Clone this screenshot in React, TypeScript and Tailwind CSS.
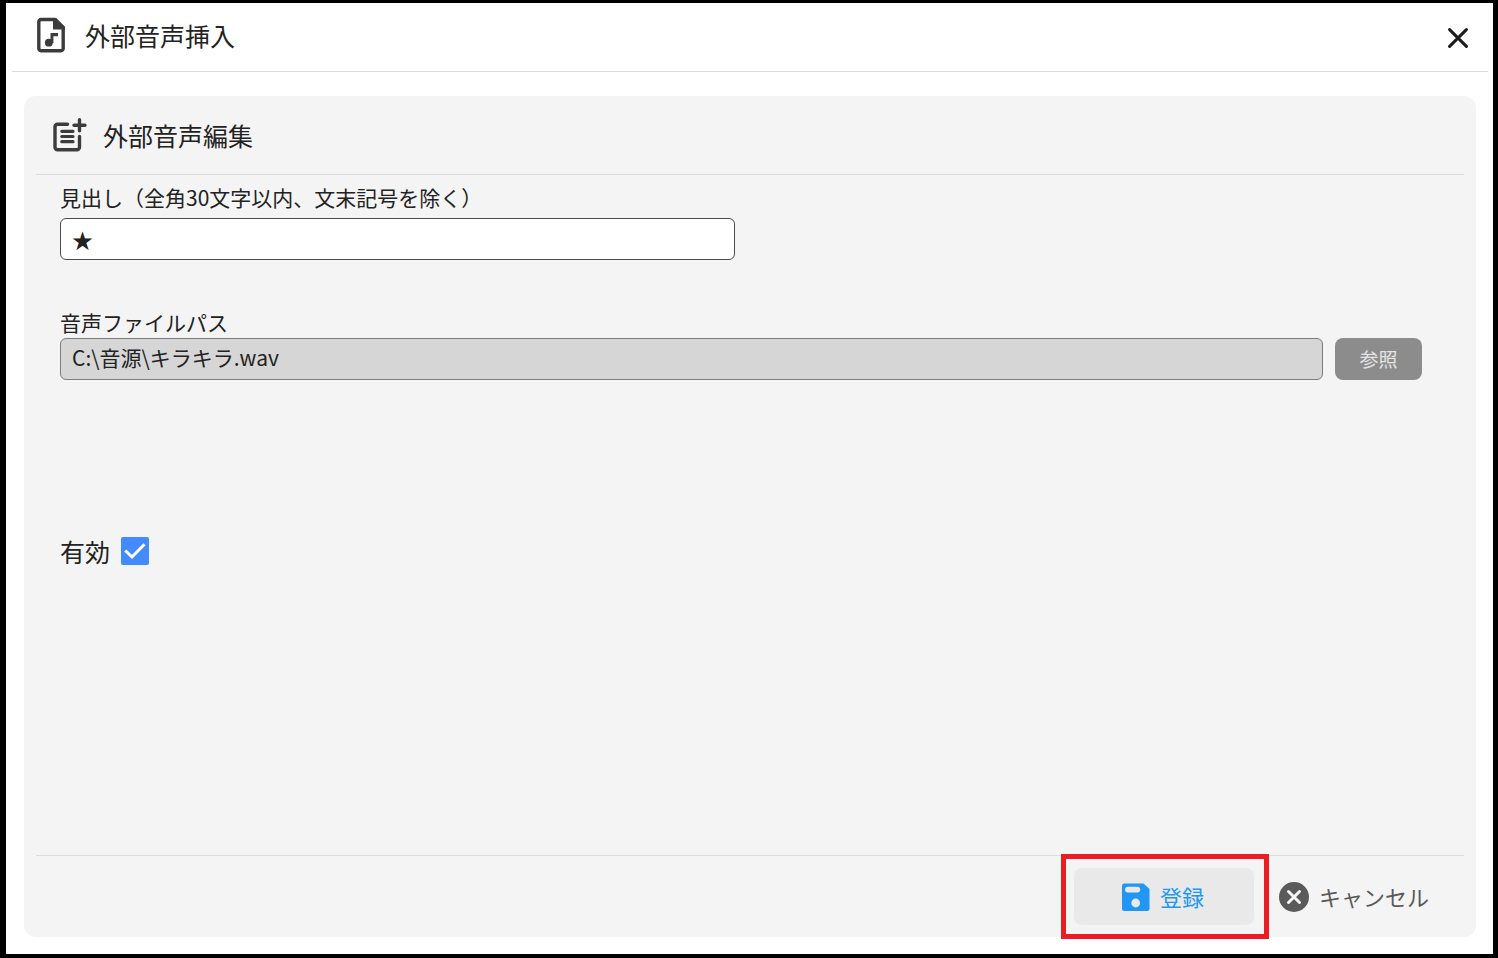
import { useState } from "react";

function AudioFileIcon() {
  return (
    <svg className="shrink-0" width="28" height="36" viewBox="0 0 28 36" fill="none" aria-hidden="true">
      <path
        d="M18 2.500H4A2.200 2.200 0 0 0 1.800 4.700V31.500a2.200 2.200 0 0 0 2.200 2.200h20a2.200 2.200 0 0 0 2.200-2.200V10.500z"
        stroke="#3c3c3c"
        strokeWidth="3.400"
        strokeLinejoin="round"
      />
      <path d="M16 1h3L28 10v2.500H16z" fill="#3c3c3c" />
      <circle cx="11.800" cy="25.700" r="3.900" fill="#3c3c3c" />
      <path d="M13.500 16h7.500v3.300h-4.600v6.700h-2.900z" fill="#3c3c3c" />
    </svg>
  );
}

function PostAddIcon() {
  return (
    <svg className="shrink-0" width="34" height="34" viewBox="0 0 34 34" fill="none" stroke="#3c3c3c" strokeLinecap="round" aria-hidden="true">
      <path d="M14.500 6.200H4.500A2.500 2.500 0 0 0 2 8.700v20.500a2.500 2.500 0 0 0 2.500 2.500h19.500a2.500 2.500 0 0 0 2.500-2.500V18.500" strokeWidth="3.400" />
      <path d="M8.800 13.300h11.200M8.800 18.500h11.200M8.800 23.700h11.200" strokeWidth="3.200" />
      <path d="M26.500 1.700v11M21 7.200h11" strokeWidth="3.400" />
    </svg>
  );
}

function CloseIcon() {
  return (
    <svg width="20" height="20" viewBox="0 0 20 20" fill="none" stroke="#1c1c1c" strokeWidth="3" strokeLinecap="round" aria-hidden="true">
      <path d="M1.600 1.600l16.800 16.800M18.400 1.600L1.600 18.400" />
    </svg>
  );
}

function SaveIcon() {
  return (
    <svg className="shrink-0" width="28" height="28" viewBox="0 0 28 28" aria-hidden="true">
      <path d="M2.500 .5h19L27.500 6v19.500a2.500 2.500 0 0 1-2.500 2.500H2.500A2.500 2.500 0 0 1 0 25.500V3A2.500 2.500 0 0 1 2.500 .5z" fill="#2196f3" />
      <rect x="3" y="3.700" width="15.200" height="5.800" rx="2.900" fill="#e9e9e9" />
      <circle cx="13.700" cy="20" r="4.400" fill="#e9e9e9" />
    </svg>
  );
}

function CancelIcon() {
  return (
    <svg className="shrink-0" width="30" height="30" viewBox="0 0 30 30" aria-hidden="true">
      <circle cx="15" cy="15" r="15" fill="#5a5a5a" />
      <path d="M9.500 9.500l11 11M20.500 9.500l-11 11" stroke="#f4f4f4" strokeWidth="3" strokeLinecap="round" />
    </svg>
  );
}

export default function App() {
  const [heading, setHeading] = useState("★");
  const [enabled, setEnabled] = useState(true);

  return (
    <div className="flex min-h-screen flex-col border-t-[3px] border-r-[5px] border-b-4 border-l-[6px] border-black bg-white font-['Noto_Sans_CJK_JP',sans-serif] text-[#222222]">
      <header className="mr-[5px] ml-1.5 flex h-[69px] items-center border-b border-[#dcdcdc] pr-5 pb-1 pl-[25px]">
        <AudioFileIcon />
        <h1 className="ml-5 text-[25px] leading-9">外部音声挿入</h1>
        <button type="button" aria-label="閉じる" className="mt-1.5 ml-auto">
          <CloseIcon />
        </button>
      </header>

      <main className="mt-6 mr-[17px] mb-[17px] ml-[18px] flex flex-1 flex-col rounded-xl bg-[#f4f4f4] px-3">
        <div className="flex h-[79px] items-center border-b border-[#dcdcdc] pl-[17px]">
          <PostAddIcon />
          <h2 className="ml-4 text-[25px] leading-9">外部音声編集</h2>
        </div>

        <form className="flex flex-1 flex-col pr-[42px] pl-6">
          <label htmlFor="heading" className="mt-1.5 text-[21px] leading-8">
            見出し（全角30文字以内、文末記号を除く）
          </label>
          <input
            id="heading"
            type="text"
            value={heading}
            onChange={(e) => setHeading(e.target.value)}
            className="mt-[5px] h-[42px] w-full max-w-[675px] rounded-md border border-[#4c4c4c] bg-white px-[11px] text-[21px]"
          />

          <label htmlFor="path" className="mt-[46px] text-[21px] leading-8">
            音声ファイルパス
          </label>
          <div className="flex gap-3">
            <input
              id="path"
              type="text"
              readOnly
              value="C:\音源\キラキラ.wav"
              className="h-[42px] min-w-0 flex-1 rounded-md border border-[#7c7c7c] bg-[#d6d6d6] px-[11px] pb-1 text-[21px]"
            />
            <button type="button" className="h-[42px] w-[87px] rounded-lg bg-[#8c8c8c] text-[19px] text-[#e4e4e4]">
              参照
            </button>
          </div>

          <div className="mt-[153px] flex items-center gap-[11px]">
            <label htmlFor="enabled" className="text-[25px] leading-9">
              有効
            </label>
            <span className="grid size-7 place-items-center">
              <input
                id="enabled"
                type="checkbox"
                checked={enabled}
                onChange={(e) => setEnabled(e.target.checked)}
                className="peer col-start-1 row-start-1 size-7 appearance-none rounded-xs border-2 border-[#5a5a5a] bg-white checked:border-0 checked:bg-[#448aff]"
              />
              <svg className="pointer-events-none invisible col-start-1 row-start-1 peer-checked:visible" width="28" height="28" viewBox="0 0 28 28" fill="none" aria-hidden="true">
                <path d="M4.300 13.500l6.700 6.500L23.500 7.300" stroke="#ffffff" strokeWidth="3" />
              </svg>
            </span>
          </div>
        </form>

        <footer className="flex items-center justify-end border-t border-[#dcdcdc] pt-3 pr-[35px] pb-3">
          <div className="relative">
            <button type="button" className="flex h-[57px] w-[180px] items-center justify-center gap-2.5 rounded-lg bg-[#e9e9e9] pr-0.5 text-[22px] text-[#2196f3]">
              <SaveIcon />
              登録
            </button>
            <div className="pointer-events-none absolute -top-3.5 -right-[15px] -bottom-3.5 -left-[13px] border-5 border-[#ed1c24]" />
          </div>
          <button type="button" className="ml-[25px] flex items-center gap-2.5 text-[22px] text-[#5a5a5a]">
            <CancelIcon />
            キャンセル
          </button>
        </footer>
      </main>
    </div>
  );
}
